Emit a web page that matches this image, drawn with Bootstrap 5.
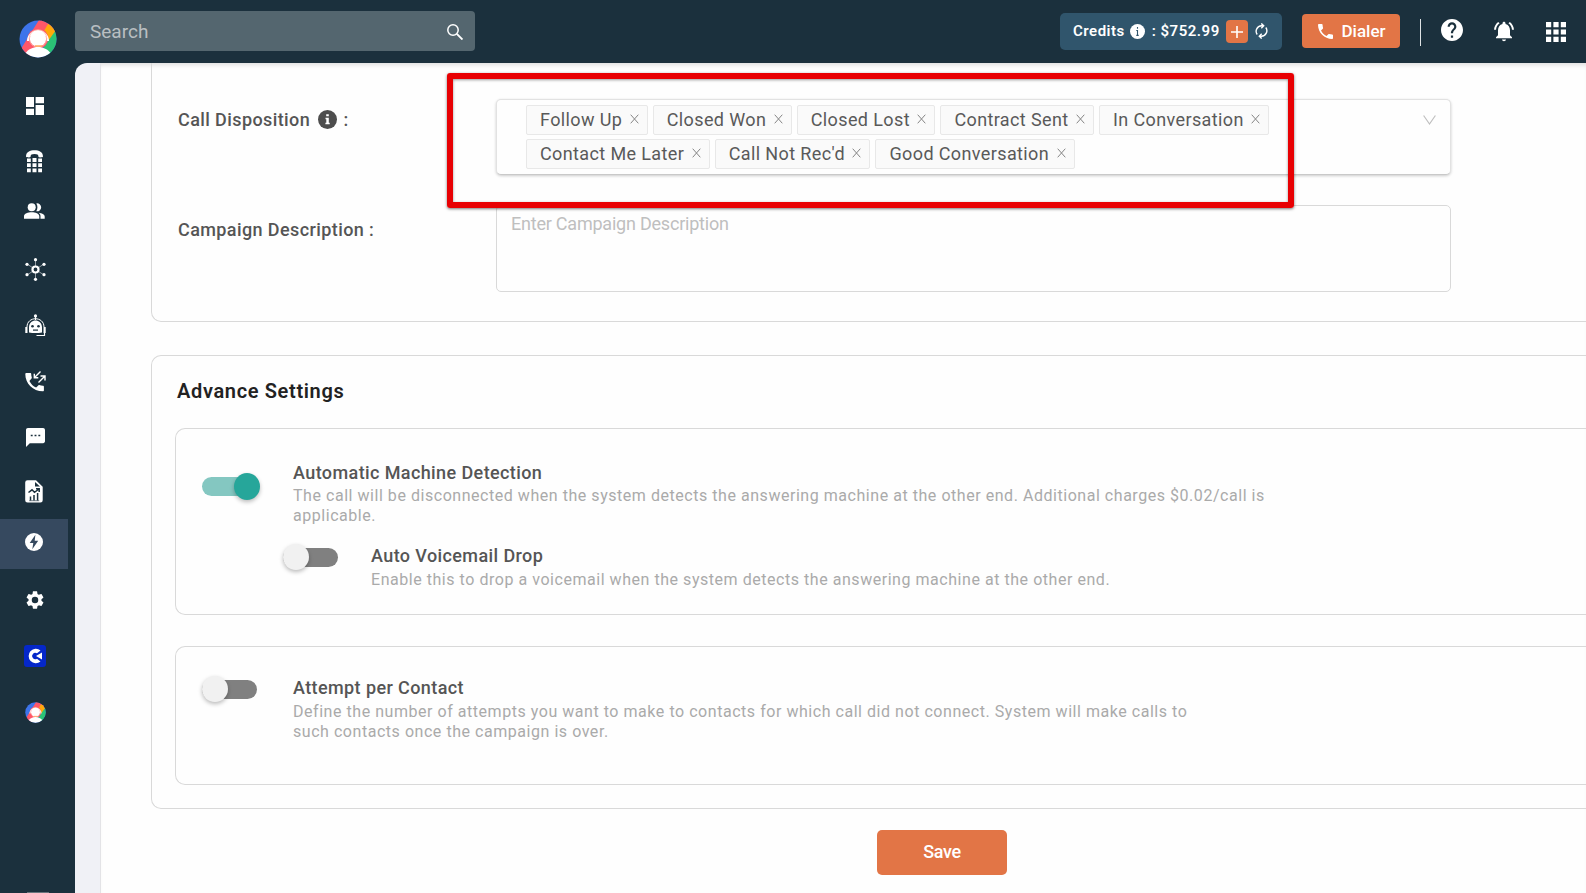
<!DOCTYPE html>
<html lang="en">
<head>
<meta charset="utf-8">
<meta name="viewport" content="width=device-width, initial-scale=1">
<title>Campaign settings</title>
<link href="https://cdn.jsdelivr.net/npm/bootstrap@5.3.0/dist/css/bootstrap.min.css" rel="stylesheet">
<style>
body{font-family:Roboto,"Liberation Sans",sans-serif;background:#1b303d;height:100vh;color:#555}
svg{display:block;flex:none}
.side{width:75px;padding-top:20px}
.brand{margin-left:18.5px;height:61px}
.side-nav{width:68px}
.side-nav a{height:50px;margin-top:6px;color:#fff;padding:0 0 0 2px}
.side-nav a:nth-child(1){margin-top:0}
.side-nav a:nth-child(2){margin-top:5px;padding:0}
.side-nav a:nth-child(3){margin-top:0;padding:0}
.side-nav a:nth-child(4){margin-top:8px}
.side-nav a:nth-child(8){margin-top:5px;padding:0 0 1px}
.side-nav a:nth-child(9){margin-top:2px;background:#36495f;padding:0 0 4px}
.side-end{width:22px;height:1px;margin:155px 0 0 27px;background:#68757d}
.top{height:63px;padding-top:11px}
.search-box{width:400px;height:40px;background:#54666f;border-radius:4px;padding:2px 12px 0 15px;font-size:19px;color:#b9bfc2}
.credits{width:222px;height:37px;margin:2px 0 0 585px;background:#30556c;border-radius:5px;padding:0 0 1px 13px;font-size:15px;font-weight:600;color:#fff;letter-spacing:.5px}
.credits .info{margin:1px 0 0 5px}
.credits .sum{margin-left:7px}
.plus{width:22px;height:23px;background:#e27546;border-radius:4px;margin:1px 7px 0 6px}
.dial{width:98px;height:34px;margin:3px 0 0 20px;background:#e27546;border-radius:4px;color:#fff;font-size:17px;font-weight:500;padding:1px 0 0 16px;border:0}
.dial span{margin-left:8.5px}
.vline{width:1px;height:27px;background:#dfe3e5;margin:8px 0 0 20px}
.top-icons{margin-left:20px;padding-top:8px}
.main{background:#f0f1f6;border-radius:12px 0 0 0;overflow:hidden;padding-left:25px}
.sheet{background:#fefefe;border-left:1px solid #e3e3e6;height:830px;padding-left:50px;box-shadow:inset 0 5px 5px -3px #0002}
.panel{border:1px solid #d9d9d9;border-right:0;border-radius:10px 0 0 10px}
.panel-a{border-top:0;border-top-left-radius:0;height:259px;padding:36px 0 0 26px}
.panel-b{height:454px;margin-top:33px;padding-left:23px}
.lab{width:318px;font-size:18px;font-weight:500;letter-spacing:.4px;line-height:24px;padding-top:9px;flex:none}
.lab svg{margin:2px 7px 0 7.5px}
.pick{width:955px;height:76px;border:1px solid #e2e2e2;border-bottom-color:#c9c9c9;border-radius:5px;box-shadow:0 1px 3px #0003;padding:5px 14px 0 29px;background:#fefefe;flex:none}
.tags{width:800px;gap:4px 5px}
.tag{height:30px;border:1px solid #e8e8e8;border-radius:2px;background:#fafafa;padding:0 8px 0 13px;font-size:18px;line-height:28px;letter-spacing:.38px;color:#595959}
.tag svg{margin:0 0 2px 7.5px}
.desc-row{margin-top:30px}
.desc-row .lab{padding-top:13px}
.area{width:955px;height:87px;border:1px solid #d9d9d9;border-radius:5px;padding:4px 14px;font-size:18px;line-height:27px;letter-spacing:-.22px;color:#bfbfbf;background:#fefefe;flex:none}
.callout{left:447px;top:73px;width:847px;height:135px;border:6px solid #e80003;border-radius:3px;box-shadow:0 1px 3px #0008,inset 0 1px 3px #0006}
.h-adv{font-size:20px;font-weight:600;color:#222;letter-spacing:.65px;line-height:24px;padding:23px 0 0 2px;height:72px;margin:0}
.in1{height:187px;padding:33px 0 0 26px}
.in2{height:139px;margin-top:31px;padding:29px 0 0 26px}
.sub-opt{padding:18px 0 0 81px}
.opt-text{margin-left:33px}
.sub-opt .opt-text{margin-left:30px}
.opt-title{font-size:18px;font-weight:500;letter-spacing:.4px;line-height:22px;color:#555}
.opt-desc{font-size:16px;letter-spacing:.54px;line-height:20px;color:#aaa;margin-top:2px}
.sub-opt .opt-text,.in2 .opt-text{padding-top:1px}
.sub-opt .opt-desc,.in2 .opt-desc{margin-top:3px}
.tg{width:58px;height:27px;position:relative;flex:none}
.tg::before{content:"";position:absolute;left:0;top:4px;width:55px;height:19px;border-radius:10px;background:#808080}
.tg::after{content:"";position:absolute;left:0;top:0;width:26px;height:26px;border-radius:50%;background:#f1f1f1;box-shadow:0 2px 4px #0004}
.tg.on{margin-top:11px}
.tg.on::before{background:#84c7c1}
.tg.on::after{left:32px;width:26px;height:27px;background:#26a69a}
.save{width:130px;height:45px;border-radius:5px;background:#e27546;color:#fff;font-size:18px;font-weight:500;letter-spacing:-.3px;margin:21px 0 0 726px;border:0;padding:0 0 2px}
</style>
</head>
<body class="d-flex overflow-hidden">
<svg width="0" height="0" class="position-absolute">
<defs>
<symbol id="brand" viewBox="0 0 38 38"><clipPath id="disc"><circle cx="19" cy="19" r="18.5"/></clipPath>
<g clip-path="url(#disc)"><path fill="#3d74ea" d="M0 0h38v38H0z"/><path fill="#ff5769" d="M20 0 0 32l8 8L38 10V0z"/><path fill="#ffa90b" d="M29 4 22 16l8 5 12-16z"/><path fill="#2bc275" d="M37 10 24 28l6 10h10V10z"/>
<circle cx="19" cy="18.5" r="10.3" fill="#ff5769"/><path d="M9 21a10 10 0 0 1 20 0" fill="none" stroke="#fff" stroke-width="2"/><circle cx="19" cy="18.5" r="8.200" fill="#fff"/><circle cx="19" cy="18.5" r="8.800" fill="none" stroke="#ffb5a8" stroke-width=".8"/><path d="M16 26h7" stroke="#ffa95a" stroke-width="1.500"/><path fill="#fff" d="M6 34c3-5 8-7 13-7s10 2 13 7l-5 4H10z"/></g></symbol>
<symbol id="x" viewBox="0 0 9 10"><path d="M.7.7l7.6 8.600M8.300.7.7 9.300" fill="none" stroke="#858585" stroke-width="1"/></symbol>
</defs>
</svg>

<aside class="side flex-shrink-0">
  <div class="brand"><svg width="38" height="38"><use href="#brand"/></svg></div>
  <nav class="side-nav d-flex flex-column">
    <a class="d-flex align-items-center justify-content-center"><svg width="18" height="18" viewBox="3 3 18 18" fill="currentColor"><path d="M3 13h8V3H3zm0 8h8v-6.300H3zm9.600 0H21V11h-8.400zm0-18v6.300H21V3z"/></svg></a>
    <a class="d-flex align-items-center justify-content-center"><svg width="17" height="23" viewBox="0 0 17 23" fill="currentColor"><path d="M0 6.500C0 2 4 .3 8.500.3S17 2 17 6.500C17 7.400 13 7.800 12.500 7c0-2.300-1.200-2.900-4-2.900s-4 .6-4 2.900C4 7.800 0 7.400 0 6.500z"/><path d="M1 8.500h3.800V12H1zm5.500-.6h4V12h-4zm5.700.6H16V12h-3.800zM1 13.200h3.800V17H1zm5.500 0h4V17h-4zm5.700 0H16V17h-3.800zM1 18.500h3.800v3.800H1zm5.500 0h4v3.800h-4zm5.700 0H16v3.800h-3.800z"/></svg></a>
    <a class="d-flex align-items-center justify-content-center"><svg width="21" height="16" viewBox="0 0 21 16" fill="currentColor"><circle cx="7.700" cy="4.300" r="4"/><path d="M0 15.700v-2.400c0-2.600 4-4 7.700-4s7.600 1.400 7.600 4v2.400zM12.300.4a4 4 0 1 1 0 7.800c1.500-2.200 1.500-5.600 0-7.800zM16.500 15.700v-2.500c0-1.700-.7-2.700-1.800-3.500 3 .4 6 1.500 6 3.700v2.300z"/></svg></a>
    <a class="d-flex align-items-center justify-content-center"><svg width="21" height="23" viewBox="0 0 21 23" fill="currentColor"><path d="M10.500 1.500v20M2 6l17 11M19 6 2 17" stroke="currentColor" stroke-width=".7" opacity=".75"/><circle cx="10.500" cy="11.500" r="3" fill="#1b303d" stroke="currentColor" stroke-width="2.200"/><circle cx="10.500" cy="1.700" r="1.600"/><circle cx="10.500" cy="21.300" r="1.600"/><circle cx="2" cy="6.300" r="1.600"/><circle cx="19" cy="6.300" r="1.600"/><circle cx="2" cy="16.700" r="1.600"/><circle cx="19" cy="16.700" r="1.600"/></svg></a>
    <a class="d-flex align-items-center justify-content-center"><svg width="21" height="23" viewBox="0 0 21 23" fill="currentColor"><circle cx="10.500" cy="1.900" r="1.600"/><path d="M10.500 3v3M2 13c0-11 17-11 17 0" fill="none" stroke="currentColor" stroke-width="1"/><path d="M4 18.500v-5c0-9.500 13-9.500 13 0v5q-6.500 1-13 0zM.3 13h2.200v6H.3zm18.200 0h2.200v6h-2.200z"/><path d="M19.500 18.500v3h-8" fill="none" stroke="currentColor" stroke-width="1.200"/><g fill="#1b303d"><circle cx="7.500" cy="12.300" r="1.300"/><circle cx="13.500" cy="12.300" r="1.300"/><path d="M8 15.500h5v1.200H8z"/></g></svg></a>
    <a class="d-flex align-items-center justify-content-center"><svg width="21" height="21" viewBox="0 0 21 21" fill="currentColor"><path d="M1.200 2h4c.6 0 1 .4 1 1 0 1.300.2 2.500.6 3.600.1.400 0 .8-.3 1L4.400 9.900c1.500 3 3.800 5.200 6.700 6.700l2.200-2.200c.3-.3.700-.4 1-.3 1.100.4 2.300.6 3.600.6.600 0 1 .4 1 1v3.600c0 .6-.4 1-1 1C8 20.300.3 12.500.3 3c0-.6.4-1 .9-1z"/><path d="M15.500.6 9.800 6.300M9.300 2.800v4h4M13.500 11.500l6-6M15.500 5h4.500v4.500" fill="none" stroke="currentColor" stroke-width="1.400"/></svg></a>
    <a class="d-flex align-items-center justify-content-center"><svg width="19" height="19" viewBox="2 2 20 20" fill="currentColor"><path d="M20 2H4c-1.100 0-2 .9-2 2v18l4-4h14c1.100 0 2-.9 2-2V4c0-1.100-.9-2-2-2zM9 10.800H7V9h2zm4 0h-2V9h2zm4 0h-2V9h2z"/></svg></a>
    <a class="d-flex align-items-center justify-content-center"><svg width="18" height="23" viewBox="0 0 18 23" fill="currentColor"><path d="M2.500.3H11l6.700 6.500v13.500a2.300 2.300 0 0 1-2.300 2.300H2.500A2.300 2.300 0 0 1 .2 20.300V2.600A2.300 2.300 0 0 1 2.500.3z"/><path d="M10 2v4.500h5z" fill="#1b303d"/><path d="M3.500 12.500 7 9.800l2.500 2.500L14 9M11 8.700h3.200V12M5.500 20.500v-4M9 20.500v-5.500M12.600 20.500V13" fill="none" stroke="#1b303d" stroke-width="1.500"/><path d="M4.200 20.700h10" stroke="#1b303d" stroke-width=".6"/></svg></a>
    <a class="d-flex align-items-center justify-content-center"><svg width="18" height="18" viewBox="0 0 18 18"><circle cx="9" cy="9" r="9" fill="currentColor"/><path d="M10.400 1.800 4.700 10h3.600l-1 6.300L13.200 7.800H9.700z" fill="#36495f"/></svg></a>
    <a class="d-flex align-items-center justify-content-center"><svg width="18" height="18" viewBox="2.200 2 19.600 20" fill="currentColor"><path d="M19.140 12.940c.04-.3.060-.61.060-.94 0-.32-.02-.64-.07-.94l2.030-1.580c.18-.14.230-.41.120-.61l-1.920-3.320c-.12-.22-.37-.29-.59-.22l-2.390.96c-.5-.38-1.030-.7-1.620-.94l-.36-2.540c-.04-.24-.24-.41-.48-.41h-3.840c-.24 0-.43.17-.47.410l-.36 2.540c-.59.240-1.130.570-1.620.940l-2.390-.96c-.22-.08-.47 0-.59.220L2.740 8.870c-.12.210-.08.470.120.610l2.030 1.580c-.05.300-.09.630-.09.940s.02.640.07.940l-2.030 1.580c-.18.140-.23.410-.12.610l1.920 3.320c.12.220.37.290.59.220l2.390-.96c.5.380 1.030.700 1.620.940l.36 2.540c.05.240.24.410.48.410h3.840c.24 0 .44-.17.470-.41l.36-2.540c.59-.24 1.130-.56 1.620-.94l2.390.96c.22.080.47 0 .59-.22l1.920-3.320c.12-.22.070-.47-.12-.61zM12 15.600A3.600 3.600 0 1 1 12 8.400a3.600 3.600 0 0 1 0 7.200z"/></svg></a>
    <a class="d-flex align-items-center justify-content-center"><svg width="22" height="22" viewBox="0 0 22 22"><rect width="22" height="22" rx="3" fill="#0527c9"/><path d="M16.500 5.500a7.200 7.200 0 1 0 0 11l-3.500-2.800a3.200 3.200 0 1 1 0-5.400z" fill="#fff"/><path d="M12 11l6-3.500v7z" fill="#fff"/></svg></a>
    <a class="d-flex align-items-center justify-content-center"><svg width="21" height="21"><use href="#brand"/></svg></a>
  </nav>
  <div class="side-end"></div>
</aside>

<div class="flex-grow-1 d-flex flex-column overflow-hidden">
  <header class="top d-flex flex-shrink-0 align-items-start">
    <div class="search-box d-flex align-items-center justify-content-between flex-shrink-0"><span>Search</span>
      <svg width="16" height="16" viewBox="0 0 16 16" fill="none" stroke="#fff"><circle cx="6" cy="6" r="5.200" stroke-width="1.500"/><path d="M9.800 9.800 15.500 15.500" stroke-width="1.900"/></svg></div>
    <div class="credits d-flex align-items-center flex-shrink-0"><span>Credits</span>
      <svg width="15" height="15" viewBox="0 0 15 15" class="info"><circle cx="7.500" cy="7.500" r="7.500" fill="#fff"/><path d="M7.500 3v1.700M7.500 6v5.500M6.300 6.500h1.200M6.300 11.400h2.400" stroke="#30556c" stroke-width="1.100"/></svg>
      <span class="sum">: $752.99</span>
      <span class="plus d-flex align-items-center justify-content-center"><svg width="12" height="12" viewBox="0 0 12 12" stroke="#fff" stroke-width="1.600"><path d="M6 0v12M0 6h12"/></svg></span>
      <svg width="13" height="16" viewBox="0 0 13 16" fill="none" stroke="#fff" stroke-width="1.400"><path d="M2.200 11.500A5.500 5.500 0 0 1 6.500 2.800H8M10.800 4.500a5.500 5.500 0 0 1-4.300 8.700H5M6.300.4 8.700 2.800 6.300 5.200M6.700 10.800 4.300 13.200l2.400 2.400"/></svg></div>
    <button class="dial d-flex align-items-center flex-shrink-0"><svg width="15" height="15" viewBox="3 3 18 18" fill="#fff"><path d="M6.620 10.790c1.440 2.830 3.760 5.140 6.590 6.590l2.200-2.200c.27-.27.670-.36 1.020-.24 1.120.37 2.330.57 3.570.57.550 0 1 .45 1 1V20c0 .550-.45 1-1 1-9.390 0-17-7.610-17-17 0-.55.450-1 1-1h3.500c.550 0 1 .450 1 1 0 1.250.200 2.450.570 3.570.110.350.030.740-.25 1.020z"/></svg><span>Dialer</span></button>
    <div class="vline"></div>
    <div class="top-icons d-flex align-items-start">
      <svg width="22" height="22" viewBox="2 2 20 20" fill="#fff"><path d="M12 2C6.480 2 2 6.480 2 12s4.480 10 10 10 10-4.480 10-10S17.520 2 12 2zm1 17h-2v-2h2zm2.070-7.750-.9.920C13.450 12.900 13 13.500 13 15h-2v-.5c0-1.100.450-2.100 1.170-2.830l1.240-1.260c.37-.36.590-.86.590-1.410 0-1.100-.9-2-2-2s-2 .9-2 2H8c0-2.210 1.790-4 4-4s4 1.790 4 4c0 .88-.36 1.680-.93 2.250z"/></svg>
      <svg class="ms-4 ps-1 pick-bell" width="28" height="21" viewBox="-1 2 24 20.500" fill="#fff"><path d="M7.580 4.080 6.150 2.650C3.750 4.480 2.170 7.300 2.030 10.500h2c.15-2.650 1.510-4.970 3.550-6.420zm12.390 6.420h2c-.15-3.200-1.730-6.020-4.120-7.850l-1.420 1.430c2.020 1.450 3.390 3.770 3.540 6.420zM18 11c0-3.070-1.640-5.640-4.500-6.320V4c0-.83-.67-1.500-1.500-1.500s-1.500.67-1.500 1.500v.680C7.630 5.360 6 7.920 6 11v5l-2 2v1h16v-1l-2-2zm-6 11c1.100 0 2-.9 2-1.700h-4c0 .8.900 1.700 2 1.700z"/></svg>
      <svg class="ms-4 ps-2 apps" width="28" height="20" viewBox="0 0 20 20" fill="#fff"><path d="M0 0h5.200v5.200H0zm7.400 0h5.200v5.200H7.400zm7.400 0H20v5.200h-5.200zM0 7.400h5.200v5.200H0zm7.400 0h5.200v5.200H7.400zm7.400 0H20v5.200h-5.200zM0 14.800h5.200V20H0zm7.400 0h5.200V20H7.400zm7.400 0H20V20h-5.200z"/></svg>
    </div>
  </header>

  <main class="main flex-grow-1">
    <div class="sheet">
      <section class="panel panel-a">
        <div class="d-flex">
          <div class="lab d-flex"><span>Call Disposition</span><svg width="19" height="19" viewBox="0 0 19 19"><circle cx="9.500" cy="9.500" r="9.500" fill="#4d4d4d"/><path d="M8.200 4.300h2.600v2H8.200zM7.500 7.800h3.300v5h.9v1.400H7.400v-1.400h.9V9.200h-.8z" fill="#fff"/></svg><span>:</span></div>
          <div class="pick d-flex justify-content-between align-items-start">
            <div class="tags d-flex flex-wrap">
              <span class="tag d-flex align-items-center">Follow Up<svg width="9" height="10"><use href="#x"/></svg></span>
              <span class="tag d-flex align-items-center">Closed Won<svg width="9" height="10"><use href="#x"/></svg></span>
              <span class="tag d-flex align-items-center">Closed Lost<svg width="9" height="10"><use href="#x"/></svg></span>
              <span class="tag d-flex align-items-center">Contract Sent<svg width="9" height="10"><use href="#x"/></svg></span>
              <span class="tag d-flex align-items-center">In Conversation<svg width="9" height="10"><use href="#x"/></svg></span>
              <span class="tag d-flex align-items-center">Contact Me Later<svg width="9" height="10"><use href="#x"/></svg></span>
              <span class="tag d-flex align-items-center">Call Not Rec'd<svg width="9" height="10"><use href="#x"/></svg></span>
              <span class="tag d-flex align-items-center">Good Conversation<svg width="9" height="10"><use href="#x"/></svg></span>
            </div>
            <svg class="mt-2" width="13" height="13" viewBox="0 0 13 13" fill="none" stroke="#bfbfbf" stroke-width="1.200"><path d="M.6 2.500 6.500 11l5.900-8.500"/></svg>
          </div>
        </div>
        <div class="desc-row d-flex">
          <div class="lab">Campaign Description :</div>
          <div class="area">Enter Campaign Description</div>
        </div>
      </section>

      <section class="panel panel-b">
        <h2 class="h-adv">Advance Settings</h2>
        <div class="panel in1">
          <div class="d-flex">
            <span class="tg on"></span>
            <div class="opt-text">
              <div class="opt-title">Automatic Machine Detection</div>
              <div class="opt-desc">The call will be disconnected when the system detects the answering machine at the other end. Additional charges $0.02/call is<br>applicable.</div>
            </div>
          </div>
          <div class="d-flex sub-opt">
            <span class="tg"></span>
            <div class="opt-text">
              <div class="opt-title">Auto Voicemail Drop</div>
              <div class="opt-desc">Enable this to drop a voicemail when the system detects the answering machine at the other end.</div>
            </div>
          </div>
        </div>
        <div class="panel in2">
          <div class="d-flex">
            <span class="tg"></span>
            <div class="opt-text">
              <div class="opt-title">Attempt per Contact</div>
              <div class="opt-desc">Define the number of attempts you want to make to contacts for which call did not connect. System will make calls to<br>such contacts once the campaign is over.</div>
            </div>
          </div>
        </div>
      </section>
      <button class="save d-flex align-items-center justify-content-center">Save</button>
    </div>
  </main>
</div>
<div class="callout position-absolute"></div>
<style>
.pick-bell{margin-top:2px}
.apps{margin-top:3px;margin-left:23px!important}
</style>
<script src="https://cdn.jsdelivr.net/npm/bootstrap@5.3.0/dist/js/bootstrap.bundle.min.js"></script>
</body>
</html>
